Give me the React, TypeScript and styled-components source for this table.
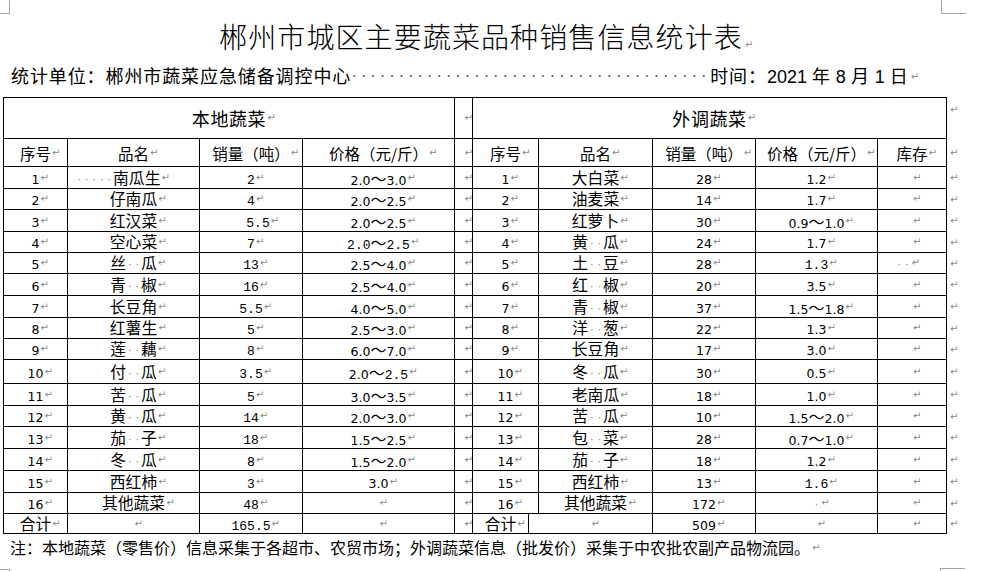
import React from 'react';
import styled, { createGlobalStyle, css } from 'styled-components';

const CJK = `"Noto Sans CJK SC", "Noto Sans", sans-serif`;

const GlobalStyle = createGlobalStyle`
  html, body { margin: 0; padding: 0; background: #fff; }
  body { font-family: ${CJK}; color: #000; }
`;

const markCss = css`
  content: '↵';
  font-family: "DejaVu Sans", sans-serif;
  font-size: 10px;
  line-height: 1;
  color: #8a8a8a;
  letter-spacing: 0;
  font-weight: normal;
`;

const Page = styled.div`
  position: relative;
  width: 981px;
  height: 571px;
  overflow: hidden;
  background: #fff;
  display: flex;
  flex-direction: column;
`;

const CropMark = styled.div<{ $x: number; $y: number; $w: number; $h: number; $sides: string }>`
  position: absolute;
  left: ${(p) => p.$x}px;
  top: ${(p) => p.$y}px;
  width: ${(p) => p.$w}px;
  height: ${(p) => p.$h}px;
  box-sizing: border-box;
  ${(p) => p.$sides.split(',').map((s) => `border-${s}: 1px solid #a4a4a4;`).join('')}
`;

const Hang = styled.span`
  position: relative;
  display: inline-block;
  white-space: nowrap;
  &::after {
    ${markCss}
    position: absolute;
    left: 100%;
    bottom: 6px;
    padding-left: 2px;
  }
`;

const Title = styled.h1`
  margin: 16px 0 0;
  padding-right: 19px;
  height: 40px;
  line-height: 40px;
  text-align: center;
  font-family: ${CJK};
  font-weight: 300;
  font-size: 28px;
  letter-spacing: 1.1px;
`;

const InfoLine = styled.div`
  margin-top: 6px;
  height: 26px;
  display: flex;
  align-items: center;
  padding-left: 11px;
  font-size: 18px;
  letter-spacing: 0.9px;
  white-space: nowrap;
`;

const Leader = styled.span`
  display: inline-block;
  width: 359px;
  font-family: "Liberation Sans", sans-serif;
  font-size: 18px;
  letter-spacing: 3.45px;
  color: #666;
`;

const Latin = styled.span`
  font-family: "Liberation Sans", sans-serif;
  letter-spacing: 0;
`;

const Table = styled.div`
  margin: 9px 0 0 3px;
  display: flex;
  flex-direction: column;
`;

const Row = styled.div<{ $cols: number[]; $h: number }>`
  display: grid;
  grid-template-columns: ${(p) => p.$cols.map((c) => `${c}px`).join(' ')} 1fr;
  height: ${(p) => p.$h}px;
`;

const Cell = styled.div<{ $last?: boolean; $top?: boolean }>`
  box-sizing: border-box;
  border-left: 1px solid #000;
  border-bottom: 1px solid #000;
  ${(p) => p.$last && 'border-right: 1px solid #000;'}
  ${(p) => p.$top && 'border-top: 1px solid #000;'}
  display: flex;
  align-items: center;
  justify-content: center;
  min-width: 0;
`;

const EndMark = styled.div<{ $top?: boolean }>`
  display: flex;
  align-items: ${(p) => (p.$top ? 'flex-start' : 'center')};
  padding: ${(p) => (p.$top ? '8px' : '0')} 0 0 3px;
  &::before {
    ${markCss}
  }
`;

const Txt = styled.span<{ $off?: number; $size?: number; $ls?: number }>`
  position: relative;
  display: inline-block;
  white-space: nowrap;
  height: 18px;
  line-height: 18px;
  font-size: ${(p) => p.$size ?? 15.8}px;
  letter-spacing: ${(p) => p.$ls ?? 0}px;
  ${(p) => (p.$off ? (p.$off > 0 ? `margin-left:${p.$off}px;` : `margin-right:${-p.$off}px;`) : '')}
  &::after {
    ${markCss}
    position: absolute;
    left: 100%;
    bottom: 4px;
    padding-left: 1px;
  }
`;

const Sp = styled.span`
  display: inline-block;
  width: 7.5px;
  text-align: center;
  color: #8c8c8c;
  font-family: "DejaVu Sans", sans-serif;
  font-size: 11px;
  vertical-align: 1px;
`;

const Sans = styled.span`
  font-family: "DejaVu Sans", sans-serif;
  font-size: 12.5px;
`;

const Mono = styled.span`
  font-family: "Liberation Mono", monospace;
  font-size: 13px;
`;

const Tilde = styled.span`
  font-family: ${CJK};
  font-size: 16px;
`;

const Note = styled.div`
  margin-top: 1px;
  padding-left: 10px;
  height: 24px;
  line-height: 24px;
  font-size: 16px;
  white-space: nowrap;
`;

function Value({ v }: { v: string }) {
  if (/\d/.test(v)) {
    const parts: React.ReactNode[] = [];
    let mono = false;
    let buf = '';
    let key = 0;
    const flush = () => {
      if (buf) {
        parts.push(mono ? <Mono key={key++}>{buf}</Mono> : <Sans key={key++}>{buf}</Sans>);
        buf = '';
      }
    };
    for (const ch of v) {
      if (ch === '@') {
        flush();
        mono = !mono;
      } else if (ch === '～') {
        flush();
        parts.push(<Tilde key={key++}>～</Tilde>);
      } else buf += ch;
    }
    flush();
    return <>{parts}</>;
  }
  return (
    <>
      {Array.from(v).map((ch, i) => (ch === '·' ? <Sp key={i}>·</Sp> : <React.Fragment key={i}>{ch}</React.Fragment>))}
    </>
  );
}

const LEFT = [64, 132, 103, 152];
const SEP = 18;
const RIGHT = [66, 114, 103, 122, 70];
const RIGHT_TOTAL = [56, 124, 103, 122, 70];

type DataRow = { h: number; l: string[]; r: string[]; off?: Record<number, number>; total?: boolean };

const rows: DataRow[] = [
  { h: 22, l: ['1', '·····南瓜生', '@2', '2.0～3.0'], r: ['1', '大白菜', '28', '1.2', ''], off: { 1: -31 } },
  { h: 21, l: ['2', '仔南瓜', '@4', '2.0～2.5'], r: ['2', '油麦菜', '14', '1.7', ''] },
  { h: 22, l: ['3', '红汉菜', '@5.5', '2.0～2.5'], r: ['3', '红萝卜', '30', '0.9～1.0', ''], off: { 2: 14 } },
  { h: 21, l: ['4', '空心菜', '@7', '@2.0～2.5'], r: ['4', '黄··瓜', '24', '1.7', ''] },
  { h: 21, l: ['5', '丝··瓜', '@13', '2.5～4.0'], r: ['5', '土··豆', '28', '@1.3', '··'], off: { 9: -18 } },
  { h: 22, l: ['6', '青··椒', '@16', '2.5～4.0'], r: ['6', '红··椒', '20', '3.5', ''] },
  { h: 22, l: ['7', '长豆角', '@5.5', '4.0～5.0'], r: ['7', '青··椒', '37', '1.5～1.8', ''] },
  { h: 21, l: ['8', '红薯生', '@5', '2.5～3.0'], r: ['8', '洋··葱', '22', '1.3', ''] },
  { h: 21, l: ['9', '莲··藕', '@8', '6.0～7.0'], r: ['9', '长豆角', '17', '3.0', ''] },
  { h: 24, l: ['10', '付··瓜', '@3.5', '2.0～@2.5'], r: ['10', '冬··瓜', '30', '0.5', ''] },
  { h: 22, l: ['11', '苦··瓜', '@5', '3.0～3.5'], r: ['11', '老南瓜', '18', '1.0', ''] },
  { h: 21, l: ['12', '黄··瓜', '@14', '2.0～3.0'], r: ['12', '苦··瓜', '10', '1.5～2.0', ''] },
  { h: 22, l: ['13', '茄··子', '@18', '1.5～2.5'], r: ['13', '包··菜', '28', '0.7～1.0', ''] },
  { h: 22, l: ['14', '冬··瓜', '8', '1.5～2.0'], r: ['14', '茄··子', '18', '1.2', ''] },
  { h: 22, l: ['15', '西红柿', '@3', '3.0'], r: ['15', '西红柿', '13', '@1.6', ''] },
  { h: 21, l: ['16', '其他蔬菜', '@48', ''], r: ['16', '其他蔬菜', '172', '·', ''] },
  { h: 20, l: ['合计', '', '@165.5', ''], r: ['合计', '', '509', '', ''], total: true },
];

const subHeads = ['序号', '品名', '销量（吨）', '价格（元/斤）'];
const subHeadsRight = ['序号', '品名', '销量（吨）', '价格（元/斤）', '库存'];

export default function App() {
  return (
    <Page>
      <GlobalStyle />
      <CropMark $x={0} $y={0} $w={10} $h={14} $sides="right,bottom" />
      <CropMark $x={941} $y={0} $w={25} $h={14} $sides="left,bottom" />
      <CropMark $x={0} $y={569} $w={10} $h={4} $sides="right,top" />
      <CropMark $x={940} $y={568} $w={25} $h={5} $sides="left,top" />

      <Title>
        <Hang>郴州市城区主要蔬菜品种销售信息统计表</Hang>
      </Title>

      <InfoLine>
        统计单位：郴州市蔬菜应急储备调控中心
        <Leader>{'·'.repeat(38)}</Leader>
        <Hang>
          时间：<Latin>2021 </Latin>年<Latin> 8 </Latin>月<Latin> 1 </Latin>日
        </Hang>
      </InfoLine>

      <Table>
        <Row $cols={[451, SEP, 475]} $h={42}>
          <Cell $top>
            <Txt $size={18} $ls={0.6}>本地蔬菜</Txt>
          </Cell>
          <Cell $top>
            <Txt />
          </Cell>
          <Cell $top $last>
            <Txt $size={18} $ls={0.6}>外调蔬菜</Txt>
          </Cell>
          <EndMark $top />
        </Row>

        <Row $cols={[...LEFT, SEP, ...RIGHT]} $h={28}>
          {subHeads.map((s) => (
            <Cell key={`l${s}`}>
              <Txt $size={15.5}>{s}</Txt>
            </Cell>
          ))}
          <Cell>
            <Txt />
          </Cell>
          {subHeadsRight.map((s, i) => (
            <Cell key={`r${s}`} $last={i === 4}>
              <Txt $size={15.5}>{s}</Txt>
            </Cell>
          ))}
          <EndMark />
        </Row>

        {rows.map((row, ri) => {
          const cells = [...row.l, '\u0000', ...row.r];
          return (
            <Row key={ri} $cols={[...LEFT, SEP, ...(row.total ? RIGHT_TOTAL : RIGHT)]} $h={row.h}>
              {cells.map((v, ci) => (
                <Cell key={ci} $last={ci === cells.length - 1}>
                  <Txt $off={row.off?.[ci]}>{v === '\u0000' ? null : <Value v={v} />}</Txt>
                </Cell>
              ))}
              <EndMark />
            </Row>
          );
        })}
      </Table>

      <Note>
        <Hang>注：本地蔬菜（零售价）信息采集于各超市、农贸市场；外调蔬菜信息（批发价）采集于中农批农副产品物流园。</Hang>
      </Note>
    </Page>
  );
}
